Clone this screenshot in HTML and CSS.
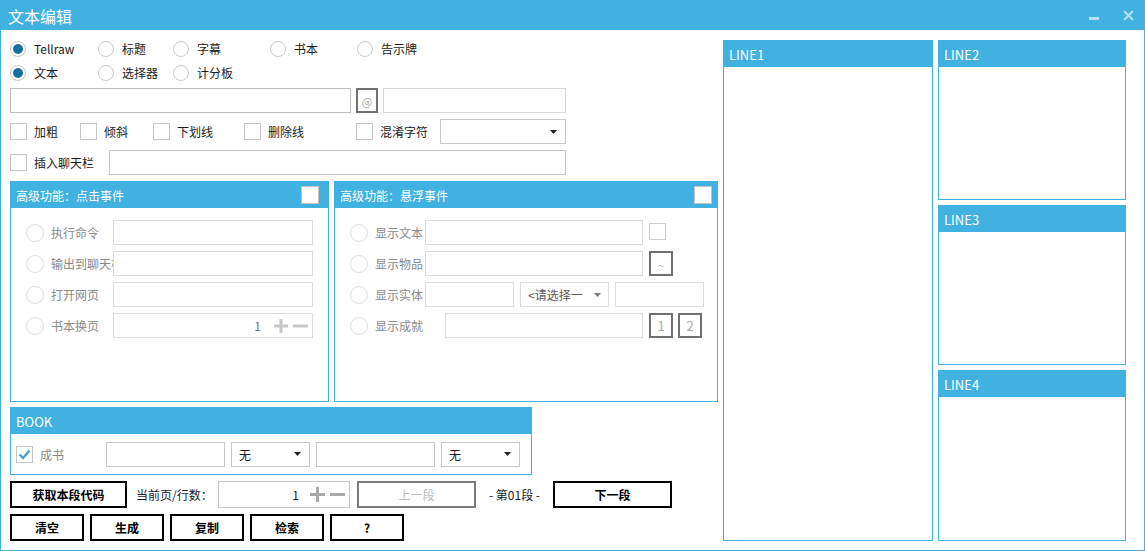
FILE: index.html
```html
<!DOCTYPE html>
<html lang="zh-CN">
<head>
<meta charset="utf-8">
<title>文本编辑</title>
<link rel="stylesheet" href="styles.css">
</head>
<body>
<div class="window">
  <div class="titlebar">
    <span class="title">文本编辑</span>
    <div class="controls">
      <span class="ctl-min"></span>
      <svg class="ctl-close" width="11" height="11" viewBox="0 0 11 11"><path d="M1 1L10 10M10 1L1 10" stroke="#b3e0f4" stroke-width="2"/></svg>
    </div>
  </div>
  <div class="content">
    <div class="left">
      <div class="radio-row">
        <div class="radio"><span class="circle on"></span>Tellraw</div>
        <div class="radio"><span class="circle"></span>标题</div>
        <div class="radio"><span class="circle"></span>字幕</div>
        <div class="radio"><span class="circle"></span>书本</div>
        <div class="radio"><span class="circle"></span>告示牌</div>
      </div>
      <div class="radio-row">
        <div class="radio"><span class="circle on"></span>文本</div>
        <div class="radio"><span class="circle"></span>选择器</div>
        <div class="radio"><span class="circle"></span>计分板</div>
      </div>
      <div class="row row-text">
        <div class="input input-main"></div>
        <div class="sqbtn at-btn">@</div>
        <div class="input input-side"></div>
      </div>
      <div class="row row-check">
        <div class="check"><span class="box"></span>加粗</div>
        <div class="check"><span class="box"></span>倾斜</div>
        <div class="check"><span class="box"></span>下划线</div>
        <div class="check"><span class="box"></span>删除线</div>
        <div class="check"><span class="box"></span>混淆字符</div>
        <div class="select"><span></span><svg class="arrow" width="7" height="4" viewBox="0 0 7 4"><path d="M0 0H7L3.5 4Z" fill="#222"/></svg></div>
      </div>
      <div class="row row-chat">
        <div class="check"><span class="box"></span>插入聊天栏</div>
        <div class="input input-chat"></div>
      </div>

      <div class="panels">
        <div class="panel panel-click">
          <div class="panel-head head-click"><span>高级功能：点击事件</span><span class="head-box"></span></div>
          <div class="panel-body">
            <div class="prow"><span class="pcircle"></span><span class="plabel">执行命令</span><div class="pinput w200"></div></div>
            <div class="prow"><span class="pcircle"></span><span class="plabel">输出到聊天栏</span><div class="pinput w200"></div></div>
            <div class="prow"><span class="pcircle"></span><span class="plabel">打开网页</span><div class="pinput w200"></div></div>
            <div class="prow"><span class="pcircle"></span><span class="plabel">书本换页</span>
              <div class="pinput w200 spin spin-light"><span class="num">1</span>
                <svg class="plus" width="14" height="14" viewBox="0 0 14 14"><path d="M7 0V14M0 7H14" stroke="currentColor" stroke-width="3"/></svg>
                <svg class="minus" width="15" height="14" viewBox="0 0 15 14"><path d="M0 7H15" stroke="currentColor" stroke-width="3"/></svg>
              </div>
            </div>
          </div>
        </div>
        <div class="panel panel-hover">
          <div class="panel-head head-hover"><span>高级功能：悬浮事件</span><span class="head-box"></span></div>
          <div class="panel-body">
            <div class="prow"><span class="pcircle"></span><span class="plabel hl">显示文本</span><div class="pinput w218"></div><span class="pbox"></span></div>
            <div class="prow"><span class="pcircle"></span><span class="plabel hl">显示物品</span><div class="pinput w218"></div><div class="sqbtn dbtn tilde">~</div></div>
            <div class="prow"><span class="pcircle"></span><span class="plabel hl">显示实体</span><div class="pinput w89"></div>
              <div class="pselect w89"><span>&lt;请选择一</span><svg class="arrow" width="7" height="4" viewBox="0 0 7 4"><path d="M0 0H7L3.5 4Z" fill="#777"/></svg></div>
              <div class="pinput w89 gap6"></div></div>
            <div class="prow"><span class="pcircle"></span><span class="plabel hl wide">显示成就</span><div class="pinput w198"></div><div class="sqbtn dbtn">1</div><div class="sqbtn dbtn gap5">2</div></div>
          </div>
        </div>
      </div>

      <div class="book">
        <div class="book-head">BOOK</div>
        <div class="book-body">
          <span class="box checked"><svg width="15" height="15" viewBox="0 0 15 15"><path d="M2.5 7.5L6 11L12.5 3.5" fill="none" stroke="#4d9fd0" stroke-width="2.4"/></svg></span>
          <span class="book-label">成书</span>
          <div class="input binput"></div>
          <div class="select bselect"><span>无</span><svg class="arrow" width="7" height="4" viewBox="0 0 7 4"><path d="M0 0H7L3.5 4Z" fill="#222"/></svg></div>
          <div class="input binput"></div>
          <div class="select bselect"><span>无</span><svg class="arrow" width="7" height="4" viewBox="0 0 7 4"><path d="M0 0H7L3.5 4Z" fill="#222"/></svg></div>
        </div>
      </div>

      <div class="brow">
        <div class="btn btn-get">获取本段代码</div>
        <span class="page-label">当前页/行数：</span>
        <div class="input spin spin-dark"><span class="num">1</span>
          <svg class="plus" width="15" height="15" viewBox="0 0 15 15"><path d="M7.5 0V15M0 7.5H15" stroke="currentColor" stroke-width="3"/></svg>
          <svg class="minus" width="15" height="15" viewBox="0 0 15 15"><path d="M0 7.5H15" stroke="currentColor" stroke-width="3"/></svg>
        </div>
        <div class="btn btn-nav disabled">上一段</div>
        <span class="seg">- 第01段 -</span>
        <div class="btn btn-nav">下一段</div>
      </div>
      <div class="brow last">
        <div class="btn btn-s">清空</div>
        <div class="btn btn-s">生成</div>
        <div class="btn btn-s">复制</div>
        <div class="btn btn-s">检索</div>
        <div class="btn btn-s">?</div>
      </div>
    </div>

    <div class="right">
      <div class="lpanel line1"><div class="lhead">LINE1</div></div>
      <div class="stack">
        <div class="lpanel line-short"><div class="lhead">LINE2</div></div>
        <div class="lpanel line-short"><div class="lhead">LINE3</div></div>
        <div class="lpanel line-long"><div class="lhead">LINE4</div></div>
      </div>
    </div>
  </div>
</div>
</body>
</html>
```
FILE: styles.css
```css
* { box-sizing: border-box; }
html, body { margin: 0; padding: 0; background: #fff; }
body {
  font-family: "Noto Sans CJK SC", "Microsoft YaHei", sans-serif;
  font-size: 12px;
  color: #1b1b1b;
}
.window {
  width: 1145px;
  height: 551px;
  border: 1px solid #41b1e1;
  display: flex;
  flex-direction: column;
  background: #fff;
  overflow: hidden;
}
.titlebar {
  height: 29px;
  flex: none;
  background: #41b1e1;
  display: flex;
  align-items: center;
  padding-left: 7px;
  color: #fff;
}
.title { font-size: 16px; line-height: 20px; }
.controls {
  margin-left: auto;
  display: flex;
  align-items: center;
  padding-right: 10px;
}
.ctl-min {
  width: 10px;
  height: 3px;
  background: #b3e0f4;
  margin-top: 5px;
  margin-right: 24px;
}
.ctl-close { display: block; }

.content {
  flex: 1;
  display: flex;
  gap: 5px;
  padding: 10px 18px 9px 9px;
}
.left {
  width: 708px;
  flex: none;
  display: flex;
  flex-direction: column;
}

/* top radios */
.radio-row {
  display: grid;
  grid-template-columns: 88px 75px 97px 87px auto;
  height: 16px;
  margin-bottom: 8px;
}
.radio { display: flex; align-items: center; gap: 8px; line-height: 16px; padding-top: 1px; }
.circle {
  width: 16px; height: 16px; flex: none;
  border: 1px solid #c9c9c9;
  border-radius: 50%;
  display: flex; align-items: center; justify-content: center;
  margin-top: -1px;
}
.circle.on::after {
  content: "";
  width: 10px; height: 10px;
  border-radius: 50%;
  background: #166fa0;
}

.row { display: flex; height: 25px; margin-bottom: 6px; align-items: center; }
.input { height: 25px; border: 1px solid #c8c8c8; background: #fff; }
.row-text { gap: 5px; }
.input-main { width: 341px; border-color: #bdbdbd; }
.input-side { width: 183px; border-color: #d6d6d6; }
.sqbtn {
  border: 2px solid #707070;
  display: flex; align-items: center; justify-content: center;
  color: #a8a8a8;
  background: #fff;
}
.at-btn { width: 22px; height: 25px; font-size: 11px; }

.row-check {
  display: grid;
  grid-template-columns: 70px 73px 91px 112px 84px 126px;
  align-items: center;
}
.check { display: flex; align-items: center; gap: 7px; }
.box {
  width: 17px; height: 17px; flex: none;
  border: 1px solid #c6c6c6;
  background: #fff;
  display: flex; align-items: center; justify-content: center;
}
.select {
  height: 25px;
  border: 1px solid #c8c8c8;
  display: flex; align-items: center; justify-content: space-between;
  padding: 0 8px 0 7px;
}
.arrow { display: block; flex: none; }
.row-chat { display: grid; grid-template-columns: 99px 457px; }

/* event panels */
.panels { display: flex; gap: 5px; height: 221px; margin-bottom: 5px; }
.panel {
  border: 1px solid #41b1e1;
  display: flex;
  flex-direction: column;
}
.panel-click { width: 319px; }
.panel-hover { width: 384px; }
.panel-head {
  height: 26px;
  background: #41b1e1;
  color: #fff;
  display: flex;
  align-items: center;
  justify-content: space-between;
  padding: 0 9px 0 5px;
}
.head-hover { padding-right: 5px; }
.head-box {
  width: 18px; height: 18px;
  background: #fff;
  border: 1px solid #c4c4c4;
}
.panel-body {
  padding: 12px 13px 12px 15px;
  display: flex;
  flex-direction: column;
  gap: 6px;
}
.prow { display: flex; align-items: center; height: 25px; }
.pcircle {
  width: 18px; height: 18px; flex: none;
  border: 1px solid #dedede;
  border-radius: 50%;
  margin-right: 7px;
}
.plabel {
  width: 62px; flex: none;
  white-space: nowrap;
  color: #8a8a8a;
}
.plabel.hl { width: 50px; }
.plabel.hl.wide { width: 70px; }
.pinput {
  height: 25px; border: 1px solid #dcdcdc; background: #fff; flex: none;
  position: relative; z-index: 1;
}
.w200 { width: 200px; }
.w218 { width: 218px; }
.w89 { width: 89px; }
.w198 { width: 198px; }
.gap6 { margin-left: 6px; }
.pbox {
  width: 17px; height: 17px; flex: none;
  border: 1px solid #cfcfcf;
  margin-left: 6px;
  margin-top: -2px;
}
.dbtn {
  width: 24px; height: 25px; flex: none;
  margin-left: 6px;
  font-size: 13px;
  color: #a9a9a9;
}
.dbtn.gap5 { margin-left: 5px; }
.tilde { font-size: 11px; padding-top: 2px; }
.pselect {
  height: 25px; flex: none;
  margin-left: 6px;
  border: 1px solid #dcdcdc;
  display: flex; align-items: center; justify-content: space-between;
  padding: 0 7px 0 7px;
  color: #5a5a5a;
  font-size: 12px;
}

.spin {
  display: flex; align-items: center; justify-content: flex-end;
  padding-right: 4px;
}
.spin .plus { margin-left: 13px; display: block; }
.spin .minus { margin-left: 5px; display: block; }
.spin-light { color: #c8c8c8; }
.spin-light .num { color: #777; }
.spin-dark { color: #a9a9a9; width: 132px; height: 27px; }
.spin-dark .num { color: #1b1b1b; }
.spin-dark .plus { margin-left: 11px; }

/* book */
.book {
  width: 522px;
  height: 68px;
  border: 1px solid #41b1e1;
  display: flex;
  flex-direction: column;
  margin-bottom: 6px;
}
.book-head {
  height: 26px;
  background: #41b1e1;
  color: #fff;
  display: flex; align-items: center;
  padding-left: 5px;
  font-size: 13px;
}
.book-body {
  flex: 1;
  display: flex;
  align-items: center;
  padding-left: 5px;
}
.book-label { width: 66px; margin-left: 7px; color: #8a8a8a; }
.binput { width: 119px; }
.bselect { width: 79px; margin: 0 6px; }

/* buttons */
.brow { display: flex; align-items: center; height: 27px; margin-bottom: 6px; }
.brow.last { margin-bottom: 0; gap: 6px; }
.btn {
  height: 27px;
  border: 2px solid #000;
  background: #fff;
  display: flex; align-items: center; justify-content: center;
  color: #000;
  font-weight: bold;
}
.btn-get { width: 117px; }
.page-label { width: 82px; margin-left: 9px; }
.btn-nav { width: 119px; margin-left: 7px; }
.btn.disabled { border-color: #7a7a7a; color: #bdbdbd; font-weight: normal; }
.seg { width: 77px; text-align: center; margin-left: 0; }
.seg + .btn-nav { margin-left: 0; }
.btn-s { width: 74px; }

/* right side */
.right { display: flex; gap: 5px; }
.lpanel { border: 1px solid #41b1e1; display: flex; flex-direction: column; }
.line1 { width: 210px; }
.stack { width: 188px; display: flex; flex-direction: column; gap: 5px; }
.line-short { height: 160px; }
.line-long { flex: 1; }
.lhead {
  height: 26px;
  background: #41b1e1;
  color: #fff;
  display: flex; align-items: center;
  padding-left: 5px;
  font-size: 13px;
}
```
